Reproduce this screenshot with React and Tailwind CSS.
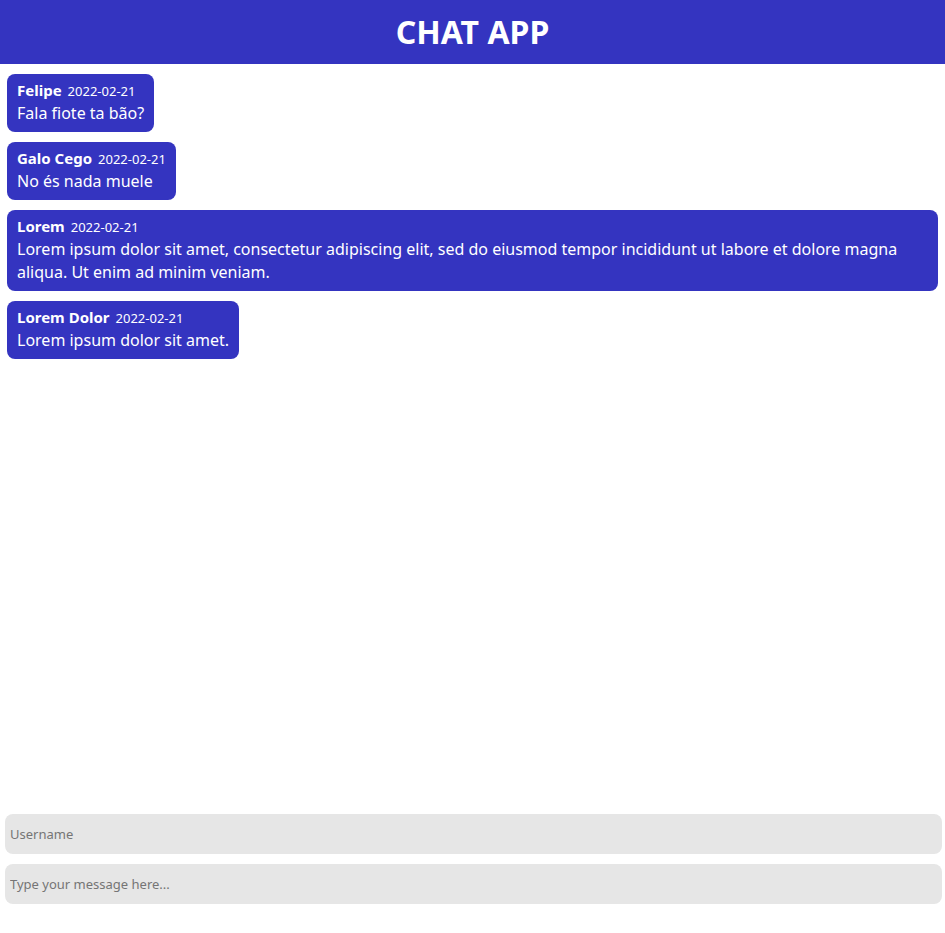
import React from "react";

const messages = [
  { name: "Felipe", date: "2022-02-21", text: "Fala fiote ta bão?" },
  { name: "Galo Cego", date: "2022-02-21", text: "No és nada muele" },
  {
    name: "Lorem",
    date: "2022-02-21",
    text: "Lorem ipsum dolor sit amet, consectetur adipiscing elit, sed do eiusmod tempor incididunt ut labore et dolore magna aliqua. Ut enim ad minim veniam.",
  },
  { name: "Lorem Dolor", date: "2022-02-21", text: "Lorem ipsum dolor sit amet." },
];

export default function App() {
  return (
    <div
      className="h-[933px] flex flex-col bg-white"
      style={{ fontFamily: '"Noto Sans", sans-serif' }}
    >
      <header className="h-16 shrink-0 bg-[#3434c0] flex items-center justify-center">
        <h1 className="text-white font-bold text-[32px] leading-none">CHAT APP</h1>
      </header>
      <main className="flex-1 flex flex-col items-start gap-[10px] px-[7px] pt-[10px]">
        {messages.map((m, i) => (
          <div
            key={i}
            className="bg-[#3434c0] text-white rounded-lg pl-[10px] pr-[10px] pt-[5px] pb-[7px]"
          >
            <div className="flex items-baseline gap-[6px] h-[23px]">
              <span className="font-bold text-[15px] leading-[23px]">{m.name}</span>
              <span className="text-[13px] leading-[23px]">{m.date}</span>
            </div>
            <p className="text-[16px] leading-[23px]">{m.text}</p>
          </div>
        ))}
      </main>
      <div className="flex flex-col gap-[10px] pl-[5px] pr-[3px] pb-[29px]">
        <input
          placeholder="Username"
          className="h-10 w-full rounded-lg bg-[#e6e6e6] px-[5px] text-[13px] outline-none placeholder:text-[#757575]"
        />
        <input
          placeholder="Type your message here..."
          className="h-10 w-full rounded-lg bg-[#e6e6e6] px-[5px] text-[13px] outline-none placeholder:text-[#757575]"
        />
      </div>
    </div>
  );
}
